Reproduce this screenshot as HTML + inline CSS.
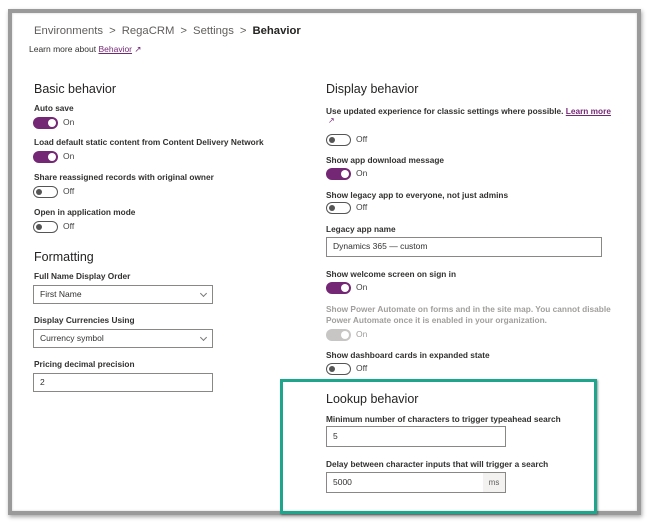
<!DOCTYPE html>
<html><head><meta charset="utf-8"><style>
*{margin:0;padding:0;box-sizing:border-box}
body{width:650px;height:527px;background:#fff;position:relative;overflow:hidden;font-family:"Liberation Sans",sans-serif;color:#323130}
.frame{position:absolute;left:8px;top:9px;width:633px;height:506px;border:4px solid #9a9a9a;box-shadow:1px 2px 4px rgba(0,0,0,.35), inset 0 0 2px rgba(0,0,0,.2)}
.a{position:absolute;white-space:nowrap}
.lbl{font-size:8.3px;font-weight:bold;color:#323130;line-height:12px}
.h{font-size:12.5px;line-height:18px;color:#252423}
.tg{position:absolute;width:25px;height:12px;border-radius:6px}
.tg.on{background:#742774}
.tg.on::after{content:"";position:absolute;right:2px;top:2px;width:8px;height:8px;border-radius:50%;background:#fff}
.tg.off{border:1px solid #555;background:#fff}
.tg.off::after{content:"";position:absolute;left:2px;top:2px;width:6px;height:6px;border-radius:50%;background:#555}
.tg.dis{background:#c8c6c4}
.tg.dis::after{content:"";position:absolute;right:2px;top:2px;width:8px;height:8px;border-radius:50%;background:#fff}
.st{font-size:8.5px;color:#444;line-height:12px}
.box{position:absolute;border:1px solid #8a8886;background:#fff;font-size:8.5px;line-height:17px;padding-left:6px;color:#323130}
.chev{position:absolute;right:6px;top:5px;width:5px;height:5px;border-right:1px solid #777;border-bottom:1px solid #777;transform:rotate(45deg)}
.sep{margin:0 6px}
</style></head><body>
<div class="frame"></div>
<div class="a" style="left:34px;top:23px;font-size:11.3px;color:#605e5c;line-height:16px">Environments<span class="sep">&gt;</span>RegaCRM<span class="sep">&gt;</span>Settings<span class="sep">&gt;</span><b style="color:#252423">Behavior</b></div>
<div class="a" style="left:29px;top:44px;font-size:8.5px;line-height:11px">Learn more about <span style="color:#742774;text-decoration:underline">Behavior</span> <span style="color:#742774">&#x2197;</span></div>

<div class="a h" style="left:34px;top:80px">Basic behavior</div>
<div class="a lbl" style="left:34px;top:102px">Auto save</div>
<div class="tg on" style="left:33px;top:117px"></div><div class="a st" style="left:63px;top:116px">On</div>
<div class="a lbl" style="left:34px;top:136px">Load default static content from Content Delivery Network</div>
<div class="tg on" style="left:33px;top:151px"></div><div class="a st" style="left:63px;top:150px">On</div>
<div class="a lbl" style="left:34px;top:171px">Share reassigned records with original owner</div>
<div class="tg off" style="left:33px;top:186px"></div><div class="a st" style="left:63px;top:185px">Off</div>
<div class="a lbl" style="left:34px;top:206px">Open in application mode</div>
<div class="tg off" style="left:33px;top:221px"></div><div class="a st" style="left:63px;top:220px">Off</div>

<div class="a h" style="left:34px;top:248px">Formatting</div>
<div class="a lbl" style="left:34px;top:270px">Full Name Display Order</div>
<div class="box" style="left:33px;top:285px;width:180px;height:19px">First Name<div class="chev"></div></div>
<div class="a lbl" style="left:34px;top:314px">Display Currencies Using</div>
<div class="box" style="left:33px;top:329px;width:180px;height:19px">Currency symbol<div class="chev"></div></div>
<div class="a lbl" style="left:34px;top:358px">Pricing decimal precision</div>
<div class="box" style="left:33px;top:373px;width:180px;height:19px">2</div>

<div class="a h" style="left:326px;top:80px">Display behavior</div>
<div class="a lbl" style="left:326px;top:105px">Use updated experience for classic settings where possible. <span style="color:#742774;text-decoration:underline">Learn more</span></div>
<div class="a st" style="left:328px;top:115px;color:#742774;font-size:8px">&#x2197;</div>
<div class="tg off" style="left:326px;top:134px"></div><div class="a st" style="left:356px;top:133px">Off</div>
<div class="a lbl" style="left:326px;top:154px">Show app download message</div>
<div class="tg on" style="left:326px;top:168px"></div><div class="a st" style="left:356px;top:167px">On</div>
<div class="a lbl" style="left:326px;top:189px">Show legacy app to everyone, not just admins</div>
<div class="tg off" style="left:326px;top:202px"></div><div class="a st" style="left:356px;top:201px">Off</div>
<div class="a lbl" style="left:326px;top:223px">Legacy app name</div>
<div class="box" style="left:326px;top:237px;width:276px;height:20px">Dynamics 365 — custom</div>
<div class="a lbl" style="left:326px;top:268px">Show welcome screen on sign in</div>
<div class="tg on" style="left:326px;top:282px"></div><div class="a st" style="left:356px;top:281px">On</div>
<div class="a lbl" style="left:326px;top:303px;color:#a19f9d">Show Power Automate on forms and in the site map. You cannot disable</div>
<div class="a lbl" style="left:326px;top:314px;color:#a19f9d">Power Automate once it is enabled in your organization.</div>
<div class="tg dis" style="left:326px;top:329px"></div><div class="a st" style="left:356px;top:328px;color:#a19f9d">On</div>
<div class="a lbl" style="left:326px;top:349px">Show dashboard cards in expanded state</div>
<div class="tg off" style="left:326px;top:363px"></div><div class="a st" style="left:356px;top:362px">Off</div>

<div class="a" style="left:280px;top:379px;width:317px;height:135px;border:3px solid #1fa58b;box-shadow:1px 1px 2px rgba(0,0,0,.4)"></div>
<div class="a h" style="left:326px;top:390px">Lookup behavior</div>
<div class="a lbl" style="left:326px;top:413px">Minimum number of characters to trigger typeahead search</div>
<div class="box" style="left:326px;top:426px;width:180px;height:21px;line-height:19px">5</div>
<div class="a lbl" style="left:326px;top:458px">Delay between character inputs that will trigger a search</div>
<div class="box" style="left:326px;top:472px;width:180px;height:21px;line-height:19px">5000<div style="position:absolute;right:0;top:0;width:22px;height:19px;background:#f3f2f1;color:#605e5c;font-size:8px;text-align:center">ms</div></div>
</body></html>
